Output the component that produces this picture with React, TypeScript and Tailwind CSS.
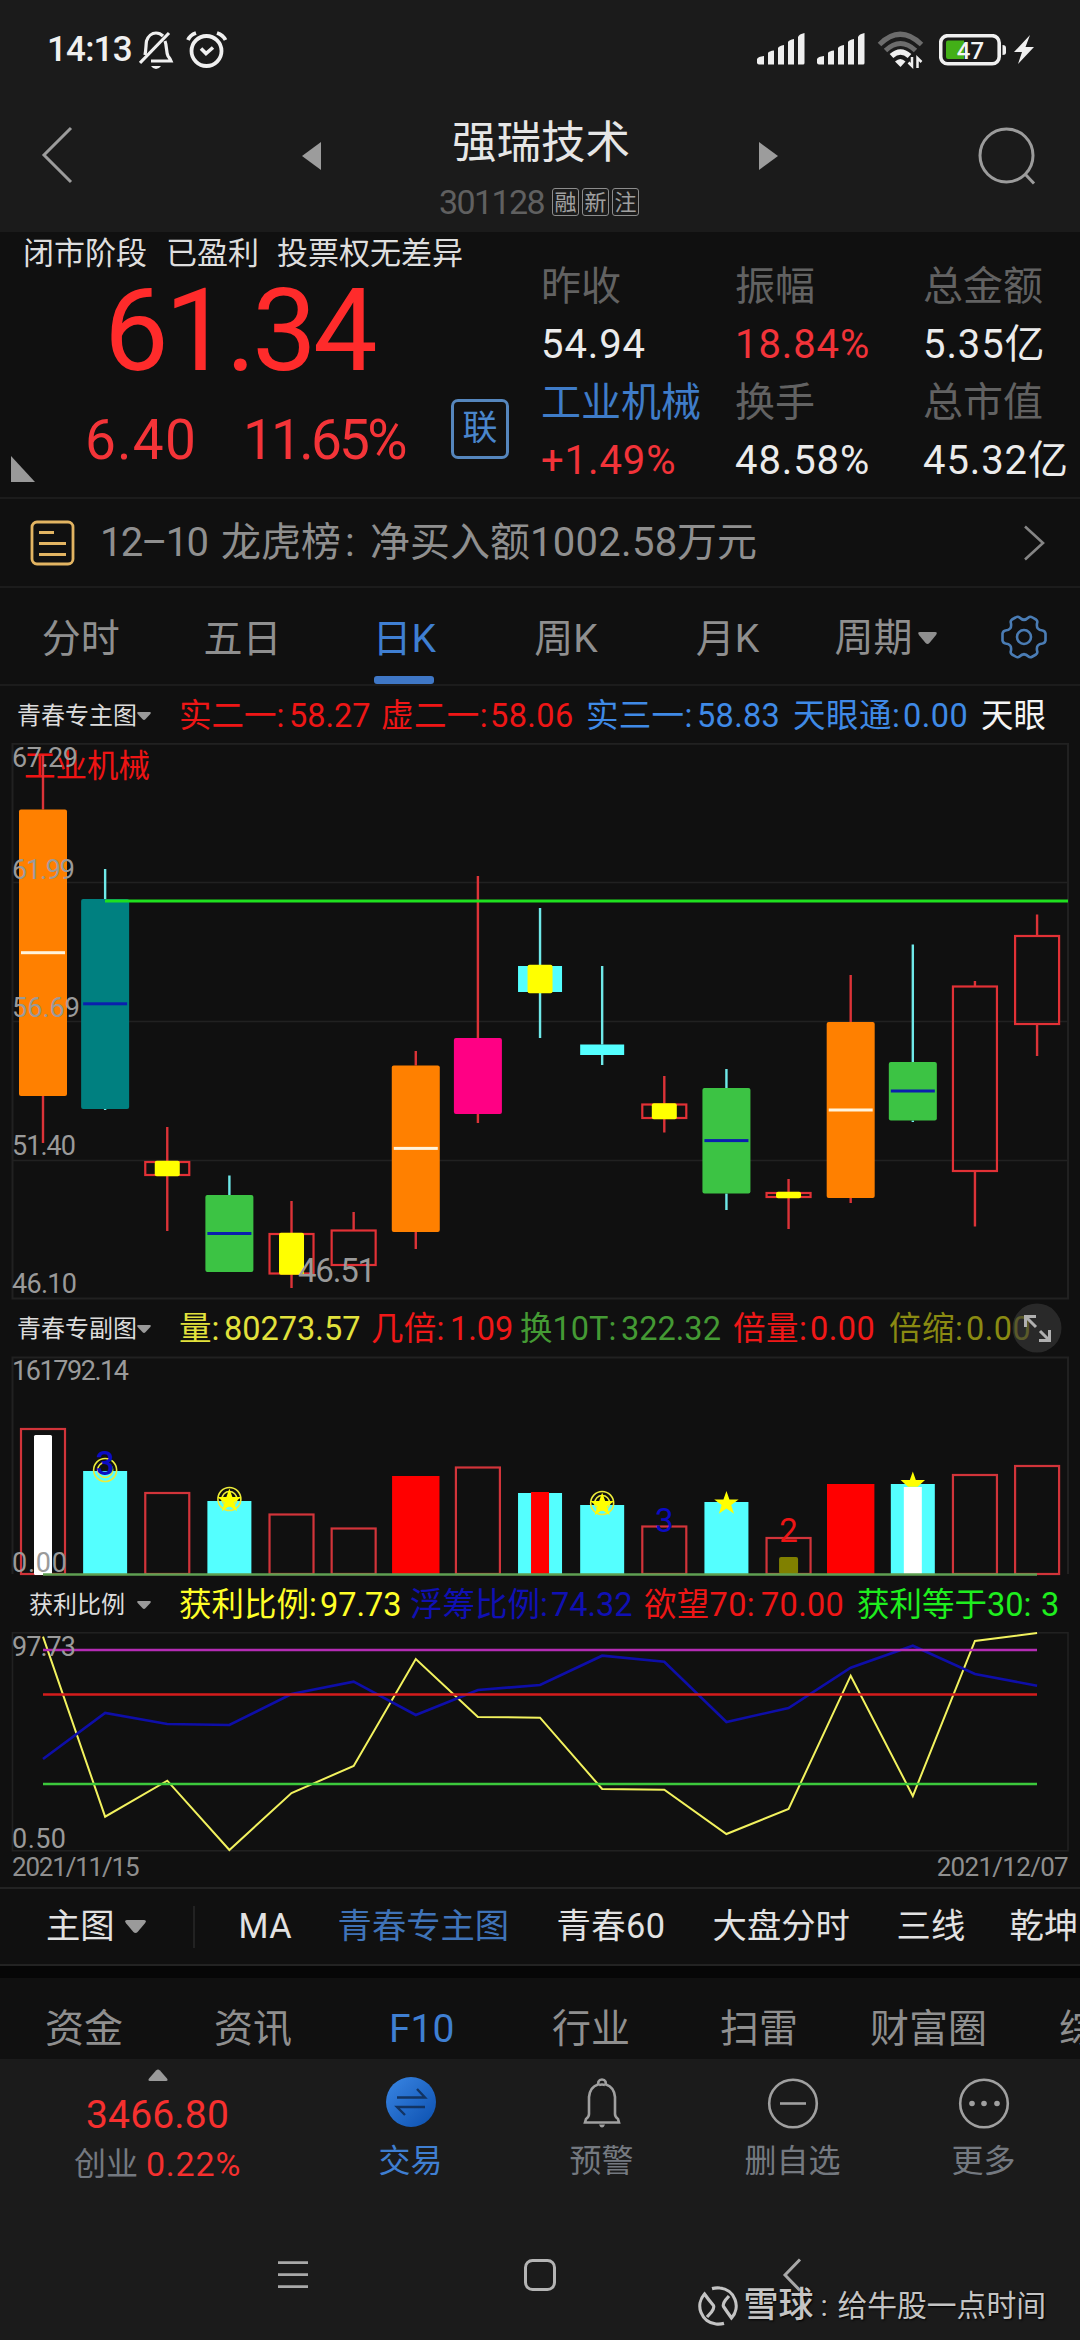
import type { ReactNode } from "react";

const X0 = 43;
const STEP = 62.13;
const cx = (i: number) => X0 + i * STEP;

type Kind = "orange" | "teal" | "hollow" | "green" | "pink" | "cyan";
type Candle = { kind: Kind; hi: number; lo: number; top: number; bot: number; mid?: number; yellow?: boolean };

/* y values are measured from the top of the 558px tall candle pane */
const CANDLES: Candle[] = [
  { kind: "orange", hi: 12, lo: 400, top: 66.5, bot: 353, mid: 209.7 },
  { kind: "teal", hi: 126, lo: 367, top: 156, bot: 366, mid: 260.8 },
  { kind: "hollow", hi: 384, lo: 488, top: 419, bot: 432, yellow: true },
  { kind: "green", hi: 432.5, lo: 520, top: 452, bot: 529, mid: 490.5 },
  { kind: "hollow", hi: 458, lo: 545, top: 491, bot: 530.5, yellow: true },
  { kind: "hollow", hi: 469, lo: 486.5, top: 487.5, bot: 522 },
  { kind: "orange", hi: 308, lo: 506, top: 322.5, bot: 489, mid: 405.4 },
  { kind: "pink", hi: 133, lo: 380, top: 295, bot: 371 },
  { kind: "cyan", hi: 165, lo: 295, top: 223, bot: 249, yellow: true },
  { kind: "cyan", hi: 223, lo: 322, top: 301.5, bot: 312 },
  { kind: "hollow", hi: 333, lo: 389.5, top: 361.5, bot: 375, yellow: true },
  { kind: "green", hi: 326, lo: 467, top: 345, bot: 450.5, mid: 397.6 },
  { kind: "hollow", hi: 436, lo: 486, top: 450, bot: 454, yellow: true },
  { kind: "orange", hi: 232, lo: 460, top: 279, bot: 455, mid: 367 },
  { kind: "green", hi: 201.6, lo: 379, top: 319, bot: 377.5, mid: 348 },
  { kind: "hollow", hi: 238, lo: 483.5, top: 243.5, bot: 428 },
  { kind: "hollow", hi: 171.6, lo: 313, top: 193, bot: 281 },
];

const FILL: Record<Kind, string> = {
  orange: "#ff8000",
  teal: "#008080",
  hollow: "none",
  green: "#3cc344",
  pink: "#ff0084",
  cyan: "#54ffff",
};

function CandleShape({ c, i }: { c: Candle; i: number }) {
  const x = cx(i);
  const red = c.kind === "orange" || c.kind === "hollow" || c.kind === "pink";
  const wick = red ? "#dc3338" : "#6fe9e9";
  const half = c.kind === "hollow" || c.kind === "cyan" ? 22 : 24;
  return (
    <g>
      <path d={`M${x} ${c.hi}V${c.top}M${x} ${c.bot}V${Math.max(c.lo, c.bot)}`} stroke={wick} strokeWidth="2.4" />
      <rect
        x={x - half}
        y={c.top}
        width={half * 2}
        height={c.bot - c.top}
        rx={c.kind === "hollow" || c.kind === "cyan" ? 0 : 2}
        fill={FILL[c.kind]}
        stroke={c.kind === "hollow" ? "#e23136" : "none"}
        strokeWidth="2.2"
      />
      {c.mid !== undefined && (
        <rect x={x - 22} y={c.mid - 1.5} width="44" height="3" fill={c.kind === "orange" ? "#fff3dc" : "#0a1fae"} />
      )}
      {c.yellow && <rect x={x - 12.5} y={c.top - 1.2} width="25" height={c.bot - c.top + 2.4} rx="2" fill="#ffff00" />}
    </g>
  );
}

function MainChart() {
  return (
    <svg className="block h-[558px] w-[1080px] shrink-0" viewBox="0 0 1080 558">
      <rect x="12.5" y="0.8" width="1055.5" height="554.7" fill="none" stroke="#212121" strokeWidth="2" />
      <path d="M12 139.5H1068M12 278.5H1068M12 417.5H1068" stroke="#212121" strokeWidth="1.6" />
      <text x="24" y="34" fill="#ee1414" fontSize="31.5">工业机械</text>
      {CANDLES.map((c, i) => (
        <CandleShape key={i} c={c} i={i} />
      ))}
      <path d="M105 158H1068" stroke="#1fe01f" strokeWidth="3" />
      <g fill="#9a9a9a" fontSize="27">
        <text x="12" y="24" textLength="66">67.29</text>
        <text x="12" y="136" textLength="63">61.99</text>
        <text x="12" y="274" textLength="68">56.69</text>
        <text x="12" y="412" textLength="64">51.40</text>
        <text x="12" y="550" textLength="65">46.10</text>
        <text x="298" y="539" fontSize="33" textLength="78">46.51</text>
      </g>
    </svg>
  );
}

type VolKind = "hollow" | "cyan" | "red";
const VOLS: { kind: VolKind; top: number }[] = [
  { kind: "hollow", top: 73 },
  { kind: "cyan", top: 115 },
  { kind: "hollow", top: 137 },
  { kind: "cyan", top: 145 },
  { kind: "hollow", top: 158.5 },
  { kind: "hollow", top: 172.5 },
  { kind: "red", top: 120 },
  { kind: "hollow", top: 111.5 },
  { kind: "cyan", top: 137 },
  { kind: "cyan", top: 149 },
  { kind: "hollow", top: 170.5 },
  { kind: "cyan", top: 146 },
  { kind: "hollow", top: 182 },
  { kind: "red", top: 128 },
  { kind: "cyan", top: 128 },
  { kind: "hollow", top: 119 },
  { kind: "hollow", top: 110 },
];

function Star({ x, y }: { x: number; y: number }) {
  return (
    <path
      transform={`translate(${x} ${y})`}
      d="M0-12.5 3-3.9 12.2-3.9 4.8 1.5 7.6 10.3 0 5 -7.6 10.3 -4.8 1.5 -12.2-3.9 -3-3.9Z"
      fill="#ffff00"
    />
  );
}

function Rings({ x, y }: { x: number; y: number }) {
  return (
    <g fill="none" stroke="#ecec3c" strokeWidth="1.6">
      <circle cx={x} cy={y} r="11.5" />
      <circle cx={x} cy={y} r="7.5" />
    </g>
  );
}

function VolumeChart() {
  return (
    <svg className="block h-[220px] w-[1080px] shrink-0" viewBox="0 0 1080 220">
      <path d="M12.5 218V1.5H1068V218" fill="none" stroke="#212121" strokeWidth="2" />
      {VOLS.map((v, i) =>
        v.kind === "hollow" ? (
          <rect key={i} x={cx(i) - 22} y={v.top} width="44" height={218 - v.top} fill="none" stroke="#d2343a" strokeWidth="2.2" />
        ) : (
          <rect
            key={i}
            x={cx(i) - (v.kind === "red" ? 23.7 : 22)}
            y={v.top}
            width={v.kind === "red" ? 47.4 : 44}
            height={218 - v.top}
            fill={v.kind === "red" ? "#ff0000" : "#54ffff"}
          />
        ),
      )}
      <rect x={cx(0) - 9} y="79" width="18" height="140" rx="1.5" fill="#fff" />
      <rect x={cx(8) - 9} y="136" width="18" height="82" fill="#ff0000" />
      <rect x={cx(12) - 9.5} y="201" width="19" height="17" rx="2" fill="#808000" />
      <path transform={`translate(${cx(14)} 128)`} d="M0-12.5 3-3.9 12.2-3.9 4.8 2.8H-4.8L-12.2-3.9-3-3.9Z" fill="#ffff00" />
      <rect x={cx(14) - 9} y="131" width="18" height="88" fill="#fff" />
      <path d="M43 218.5H1037" stroke="#5f9f52" strokeWidth="2.6" />
      <Rings x={cx(1)} y={114} />
      <Rings x={cx(3)} y={143} />
      <Star x={cx(3)} y={145} />
      <Rings x={cx(9)} y={147} />
      <Star x={cx(9)} y={149} />
      <Star x={cx(11)} y={147.5} />
      <g fontSize="33" textAnchor="middle" fill="#0b0bc4">
        <text x={cx(1)} y="119" fontWeight="500">3</text>
        <text x={cx(10)} y="176">3</text>
        <text x={cx(12)} y="186" fill="#ee1515">2</text>
      </g>
      <g fill="#9a9a9a" fontSize="27">
        <text x="12" y="24" textLength="117">161792.14</text>
        <text x="12" y="216" textLength="55">0.00</text>
      </g>
    </svg>
  );
}

const PROFIT = [4.7, 184.7, 148.7, 218, 161, 134, 27, 85, 85.7, 157, 157.7, 202, 177, 43.7, 164, 9, 1];
const FLOAT = [127, 81, 92, 93, 62, 49.7, 83, 58, 53, 23.7, 29.7, 90, 76, 35.7, 13.7, 42, 53.7];
const pts = (v: number[]) => v.map((y, i) => `${cx(i)},${y}`).join(" ");

function ProfitChart() {
  return (
    <svg className="block h-[220px] w-[1080px] shrink-0" viewBox="0 0 1080 220">
      <rect x="12.5" y="0.8" width="1055.5" height="218" fill="none" stroke="#212121" strokeWidth="1.6" />
      <g fill="none">
        <polyline points={pts(PROFIT)} stroke="#f2f25e" strokeWidth="2" />
        <polyline points={pts(FLOAT)} stroke="#0e0ea8" strokeWidth="2.6" />
        <path d="M43 18H1037" stroke="#b52cb5" strokeWidth="2.6" />
        <path d="M43 62.5H1037" stroke="#d41c1c" strokeWidth="2.4" />
        <path d="M43 152H1037" stroke="#3cc83c" strokeWidth="2.4" />
      </g>
      <g fill="#9a9a9a" fontSize="27">
        <text x="12" y="24" textLength="64">97.73</text>
        <text x="12" y="216" textLength="54">0.50</text>
      </g>
    </svg>
  );
}

function Caret({ className }: { className: string }) {
  return (
    <svg className={className} viewBox="0 0 20 12" preserveAspectRatio="none">
      <path d="M2 0H18Q21 0 19 3L12 11Q10 13 8 11L1 3Q-1 0 2 0Z" fill="currentColor" />
    </svg>
  );
}

function Legend({ name, inset, gap, children }: { name: string; inset: string; gap: string; children: ReactNode }) {
  return (
    <div className="flex h-full items-center whitespace-nowrap">
      <div className={`flex w-[179px] shrink-0 items-center text-[24px] leading-[36px] text-[#dcdcdc] ${inset}`}>
        <span>{name}</span>
        <Caret className={`h-[8px] w-[14px] text-[#9a9a9a] ${gap}`} />
      </div>
      <div className="flex min-w-0 flex-1 text-[32.5px] leading-[44px]">{children}</div>
    </div>
  );
}

function Entry({ w, color, label, lw, value }: { w: string; color: string; label: string; lw: string; value: string }) {
  return (
    <span className={`flex shrink-0 ${w} ${color}`}>
      <span className={`shrink-0 ${lw}`}>{label}</span>
      <span>{value}</span>
    </span>
  );
}

function Signal({ className }: { className: string }) {
  return (
    <svg className={`h-[34px] w-[48px] ${className}`} viewBox="0 0 48 34" fill="#efefef">
      <path d="M0 26Q1 23.5 7 23V31.5H2Q0 31.5 0 29.5Z" />
      <path d="M11 20Q12 18 17 17.5V31.5H11Z" />
      <path d="M21 15Q22 13 27 12V31.5H21Z" />
      <path d="M31 9Q32 7 37 6V31.5H31Z" />
      <path d="M41 4Q42 1 47.5 0V30Q47.5 31.5 46 31.5H41Z" />
    </svg>
  );
}

function StatusBar() {
  return (
    <div className="flex h-[98px] items-center pl-[47px] pr-[46px] pt-[2px]">
      <span className="w-[92px] text-[35px] font-medium leading-[44px] tracking-[-0.8px] text-[#f0f0f0]">14:13</span>
      <svg className="h-[40px] w-[90px]" viewBox="0 0 90 40" fill="none" stroke="#f0f0f0" strokeWidth="3.2">
        <path d="M6 25C7 20 7 14 7.5 11C9 6 13 3 17 3C20 3 22 4 24 6" />
        <path d="M26 11C28 16 27 22 29 26Q31 28.5 32 31H12" />
        <path d="M1 33 30 3" />
        <path d="M12 36H22Q20 39 17 39T12 36Z" fill="#f0f0f0" stroke="none" />
        <circle cx="67.5" cy="21" r="15" strokeWidth="3.8" />
        <path d="M62 18.5 67 23.5 74 17.5" strokeWidth="3.6" />
        <path d="M49 10Q51 5 57 3M78 3Q84 5 86.5 10" strokeWidth="3.8" />
      </svg>
      <div className="ml-auto flex items-center">
        <Signal className="mr-[12px]" />
        <Signal className="mr-[12px]" />
        <svg className="h-[38px] w-[48px]" viewBox="0 0 48 38" fill="none">
          <path d="M2.5 13.5Q23-7 44.5 13.5" stroke="#6c6c6c" strokeWidth="5" />
          <path d="M8.5 19.5Q23.5 5.5 38.5 19.5" stroke="#6c6c6c" strokeWidth="5" />
          <path d="M14.5 25Q23.5 17 32.5 25" stroke="#f0f0f0" strokeWidth="5.5" />
          <path d="M18 30.5Q23.5 25.5 28.5 30.5L23.5 36Z" fill="#f0f0f0" />
          <path d="M35 26V35L31.5 31.5M40.5 37V27L44.5 31" stroke="#f0f0f0" strokeWidth="2.5" />
        </svg>
        <svg className="ml-[14px] h-[32px] w-[69px]" viewBox="0 0 69 32">
          <rect x="1.7" y="1.7" width="58.5" height="28" rx="7" fill="none" stroke="#f0f0f0" strokeWidth="3.6" />
          <path d="M9 6.5H25V25H9Q7 25 7 23V8.5Q7 6.500 9 6.5Z" fill="#43b018" />
          <path d="M63.5 11Q67 11 67 14V18.5Q67 21 63.5 21Z" fill="#f0f0f0" />
          <text x="31.5" y="24.500" textAnchor="middle" fontSize="24" fontWeight="500" fill="#f4f4f4">47</text>
        </svg>
        <svg className="ml-[6px] h-[30px] w-[20px]" viewBox="0 0 20 30">
          <path d="M16 0 0 17H8L4 29 20 12H11.5Z" fill="#f0f0f0" />
        </svg>
      </div>
    </div>
  );
}

function TitleBar() {
  return (
    <div className="flex h-[134px] items-center pl-[41px] pr-[44px]">
      <svg className="mb-[20px] h-[58px] w-[32px]" viewBox="0 0 32 58">
        <path d="M30 2 3 29 30 56" fill="none" stroke="#9c9c9c" strokeWidth="3" />
      </svg>
      <svg className="mb-[18px] ml-[229px] h-[28px] w-[19px]" viewBox="0 0 19 28">
        <path d="M19 0V28L0 14Z" fill="#9c9c9c" />
      </svg>
      <div className="flex flex-1 flex-col items-center pt-[3px]">
        <div className="pl-[2px] text-[44.5px] leading-[58px] text-[#e6e6e6]">强瑞技术</div>
        <div className="mt-[13px] flex items-center pr-[2px]">
          <span className="text-[34px] leading-[34px] tracking-[-1.6px] text-[#606060]">301128</span>
          <span className="ml-[8px] flex gap-[3px] text-[22px] leading-[25px] text-[#a0a0a0]">
            {["融", "新", "注"].map((t) => (
              <span key={t} className="flex h-[28px] w-[27px] items-center justify-center rounded-[3px] border-[1.5px] border-[#8c8c8c]">
                {t}
              </span>
            ))}
          </span>
        </div>
      </div>
      <svg className="mb-[18px] h-[28px] w-[19px]" viewBox="0 0 19 28">
        <path d="M0 0V28L19 14Z" fill="#9c9c9c" />
      </svg>
      <svg className="mb-[19px] ml-[200px] h-[58px] w-[58px]" viewBox="0 0 58 58" fill="none" stroke="#9c9c9c" strokeWidth="3">
        <circle cx="28.5" cy="28.5" r="26.5" />
        <path d="M47 47 56 56.5" />
      </svg>
    </div>
  );
}

function Stat({ label, value, blue, red }: { label: string; value: string; blue?: boolean; red?: boolean }) {
  return (
    <div className="whitespace-nowrap text-[40px]">
      <div className={`h-[58px] leading-[58px] ${blue ? "text-[#3f7cc8]" : "text-[#626262]"}`}>{label}</div>
      <div className={`h-[58px] leading-[58px] tracking-[0.9px] ${red ? "text-[#f23339]" : "text-[#ebebeb]"}`}>{value}</div>
    </div>
  );
}

function Quote() {
  return (
    <div className="flex h-[267px] shrink-0 border-b-2 border-[#1c1c1c]">
      <div className="flex w-[541px] shrink-0 flex-col">
        <div className="mt-[1px] flex h-[42px] items-center gap-[19px] whitespace-nowrap pl-[23px] text-[31px] text-[#dedede]">
          <span>闭市阶段</span>
          <span>已盈利</span>
          <span className="-ml-[1px]">投票权无差异</span>
        </div>
        <div className="mt-[5px] h-[102px] pl-[104px] text-[115px] leading-[102px] tracking-[-3.8px] text-[#ff2b2b]">61.34</div>
        <div className="flex h-[106px]">
          <svg className="ml-[11px] mt-[74px] h-[26px] w-[24px]" viewBox="0 0 24 26">
            <path d="M0 0 24 26H0Z" fill="#999" />
          </svg>
          <span className="ml-[50px] mt-[25px] w-[158px] text-[55px] leading-[66px] tracking-[1.2px] text-[#f43438]">6.40</span>
          <span className="mt-[25px] w-[208px] text-[55px] leading-[66px] tracking-[-2.8px] text-[#f43438]">11.65%</span>
          <span className="mt-[17px] flex h-[60px] w-[58px] items-center justify-center rounded-[7px] border-[3px] border-[#5586bd] text-[35px] leading-[50px] text-[#4a86cc]">
            联
          </span>
        </div>
      </div>
      <div className="grid h-[232px] flex-1 grid-cols-[194px_188px_1fr] content-start pt-[26px]">
        <Stat label="昨收" value="54.94" />
        <Stat label="振幅" value="18.84%" red />
        <Stat label="总金额" value="5.35亿" />
        <Stat label="工业机械" value="+1.49%" blue red />
        <Stat label="换手" value="48.58%" />
        <Stat label="总市值" value="45.32亿" />
      </div>
    </div>
  );
}

function News() {
  return (
    <div className="flex h-[89px] shrink-0 items-center whitespace-nowrap border-b-2 border-[#1c1c1c] pl-[30px] pr-[35px] text-[40px] text-[#8f8f8f]">
      <svg className="h-[46px] w-[45px]" viewBox="0 0 45 46" fill="none" stroke="#e2b462" strokeWidth="2.8">
        <rect x="2" y="2" width="41" height="42" rx="5" />
        <path d="M9 12.5H24M9 23.5H36M9 34.5H36" />
      </svg>
      <span className="ml-[25px] w-[121px] tracking-[-1.8px]">12–10</span>
      <span className="w-[120px]">龙虎榜</span>
      <span className="w-[29px] pl-[4px]">:</span>
      <span>净买入额</span>
      <span className="w-[147px] tracking-[0.3px]">1002.58</span>
      <span>万元</span>
      <svg className="ml-auto h-[36px] w-[22px]" viewBox="0 0 22 36">
        <path d="M2 1.5 20 18 2 34.5" fill="none" stroke="#858585" strokeWidth="2.6" />
      </svg>
    </div>
  );
}

function Gear() {
  return (
    <svg className="h-[44px] w-[46px]" viewBox="0 0 46 44" fill="none" stroke="#4a7cb4" strokeWidth="2.6" strokeLinejoin="round">
      <path d="M14.5 2.5Q17 1 18.5 2.5Q23 7 27.5 2.5Q29 1 31.5 2.5L35 4.5Q37 6 36 8.5Q35 15 41.5 15.5Q44 16 44.5 18.5V25.5Q44 28 41.5 28.5Q35 29 36 35.5Q37 38 35 39.5L31.5 41.5Q29 43 27.5 41.5Q23 37 18.5 41.5Q17 43 14.5 41.5L11 39.5Q9 38 10 35.5Q11 29 4.5 28.5Q2 28 1.5 25.5V18.5Q2 16 4.5 15.5Q11 15 10 8.5Q9 6 11 4.5Z" />
      <circle cx="23" cy="22" r="7" />
    </svg>
  );
}

function PeriodTabs() {
  return (
    <div className="flex h-[98px] shrink-0 border-b-2 border-[#1c1c1c] text-[39px] text-[#8f8f8f]">
      {["分时", "五日", "日K", "周K", "月K"].map((t) => {
        const on = t === "日K";
        return (
          <div key={t} className="flex w-[161.7px] flex-col items-center">
            <div className={`h-[88px] pt-[2px] leading-[98px] ${on ? "text-[#3f7fd2]" : ""}`}>{t}</div>
            {on && <div className="h-[8px] w-[60px] rounded-[3px] bg-[#3f77c6]" />}
          </div>
        );
      })}
      <div className="flex h-[98px] items-center pl-[26px] pt-[2px]">
        周期
        <Caret className="ml-[6px] h-[12px] w-[19px]" />
      </div>
      <div className="ml-auto flex h-[98px] items-center pr-[33px]">
        <Gear />
      </div>
    </div>
  );
}

function IndicatorTabs() {
  return (
    <div className="flex h-[79px] shrink-0 items-center overflow-hidden whitespace-nowrap border-y-2 border-[#232323] text-[34.3px] text-[#e2e2e2]">
      <span className="ml-[46px] shrink-0">主图</span>
      <Caret className="ml-[10px] h-[13px] w-[21px] shrink-0 text-[#9a9a9a]" />
      <span className="ml-[47px] h-[42px] w-[2px] shrink-0 bg-[#222]" />
      <span className="ml-[44px] w-[99px] shrink-0 tracking-[0.5px]">MA</span>
      <span className="w-[219px] shrink-0 text-[#3f73b8]">青春专主图</span>
      <span className="w-[156px] shrink-0 tracking-[0.4px]">青春60</span>
      <span className="w-[184px] shrink-0">大盘分时</span>
      <span className="w-[113px] shrink-0">三线</span>
      <span className="shrink-0">乾坤</span>
    </div>
  );
}

function InfoTabs() {
  return (
    <div className="flex h-[81px] shrink-0 overflow-hidden whitespace-nowrap text-[39px] leading-[102px] text-[#8f8f8f]">
      <span className="ml-[45px] w-[169px] shrink-0">资金</span>
      <span className="w-[175px] shrink-0">资讯</span>
      <span className="w-[163px] shrink-0 text-[#3f7fd2]">F10</span>
      <span className="w-[168px] shrink-0">行业</span>
      <span className="w-[150px] shrink-0">扫雷</span>
      <span className="w-[189px] shrink-0">财富圈</span>
      <span className="shrink-0">综</span>
    </div>
  );
}

function NavItem({ label, active, children }: { label: string; active?: boolean; children: ReactNode }) {
  return (
    <div className="flex w-[191px] flex-col items-center">
      <svg className="mt-[18px] h-[54px] w-[54px]" viewBox="0 0 54 54" fill="none" stroke="#a0a0a0" strokeWidth="2.6">
        {children}
      </svg>
      <span className={`mt-[8px] text-[32px] leading-[44px] ${active ? "text-[#3f7fd2]" : "text-[#747980]"}`}>{label}</span>
    </div>
  );
}

function BottomNav() {
  return (
    <div className="flex h-[141px] shrink-0">
      <div className="flex w-[315px] flex-col items-center">
        <svg className="mt-[10px] h-[12px] w-[20px]" viewBox="0 0 20 12">
          <path d="M8 1.5Q10-.5 12 1.5L19 9.5Q20.5 12 18 12H2Q-.5 12 1 9.5Z" fill="#9a9a9a" />
        </svg>
        <div className="mt-[11px] text-[39px] leading-[46px] tracking-[0.2px] text-[#f6302f]">3466.80</div>
        <div className="mt-[3px] flex gap-[8px] text-[32px] leading-[46px]">
          <span className="text-[#747980]">创业</span>
          <span className="text-[34px] tracking-[0.8px] text-[#f6302f]">0.22%</span>
        </div>
      </div>
      <NavItem label="交易" active>
        <defs>
          <linearGradient id="trade" x1="0" y1="0" x2="1" y2="1">
            <stop offset="0" stopColor="#3a86e4" />
            <stop offset="1" stopColor="#0b4fae" />
          </linearGradient>
        </defs>
        <circle cx="27" cy="25" r="25" fill="url(#trade)" stroke="none" />
        <path d="M13 20.5H41L33 12M41 30H13L21 38" stroke="#123463" strokeWidth="2.4" />
      </NavItem>
      <NavItem label="预警">
        <path d="M10 45.5H44L43 42Q40 40 40 37V20Q39 10 31 7.5Q30.5 5 30.5 4.5Q29.5 2.5 27 2.5T23.5 4.5Q23.5 5 23 7.5Q15 10 14 20V37Q14 40 11 42Z" />
        <path d="M24 47.5H30Q29 50.5 27 50.5T24 47.5Z" fill="#a0a0a0" stroke="none" />
        <path d="M24 8Q27 7 30 8" />
      </NavItem>
      <NavItem label="删自选">
        <circle cx="27" cy="26.5" r="23.8" />
        <path d="M14 26.5H40" />
      </NavItem>
      <NavItem label="更多">
        <circle cx="27" cy="26.5" r="23.8" />
        <g fill="#a0a0a0" stroke="none">
          <circle cx="15" cy="26.5" r="2.8" />
          <circle cx="27" cy="26.5" r="2.8" />
          <circle cx="40" cy="26.5" r="2.8" />
        </g>
      </NavItem>
    </div>
  );
}

function SystemNav() {
  return (
    <div className="relative flex h-[140px] items-start pl-[278px] pt-[58px]">
      <svg className="h-[34px] w-[30px]" viewBox="0 0 30 34">
        <path d="M0 4.7H30M0 16.7H30M0 28.7H30" stroke="#a8a8a8" strokeWidth="2.8" />
      </svg>
      <svg className="ml-[215px] h-[34px] w-[34px]" viewBox="0 0 34 34">
        <rect x="2.5" y="2.5" width="29" height="29" rx="7" fill="none" stroke="#b4b4b4" strokeWidth="3" />
      </svg>
      <svg className="ml-[225px] h-[34px] w-[20px]" viewBox="0 0 20 34">
        <path d="M18 1.5 3 17 18 32.5" fill="none" stroke="#a8a8a8" strokeWidth="3" />
      </svg>
      <div className="absolute bottom-[14px] right-[34px] flex items-center whitespace-nowrap text-[#c4c4c4] [text-shadow:1px_1px_2px_#000]">
        <svg className="h-[40px] w-[40px]" viewBox="0 0 40 40" fill="none" stroke="#c4c4c4" strokeWidth="3.2">
          <path d="M14 2.6Q18 1.5 22 2A18 18 0 0 1 33.5 32Q28.5 25 25.500 20.500Q24.5 18 27.500 14L31 10" />
          <path d="M26 37.400Q22 38.500 18 38A18 18 0 0 1 6.500 8Q11.500 15 15.500 19.500Q16.500 22 13.500 26L9 31" />
        </svg>
        <span className="ml-[5px] text-[35px] font-medium leading-[40px]">雪球</span>
        <span className="w-[24px] pl-[7px] text-[30px] leading-[40px]">:</span>
        <span className="text-[29.8px] leading-[40px]">给牛股一点时间</span>
      </div>
    </div>
  );
}

export default function App() {
  return (
    <div className="flex h-[2340px] w-[1080px] flex-col overflow-hidden bg-[#101010] font-[Roboto,'Noto_Sans_CJK_SC',sans-serif]">
      <div className="shrink-0 bg-[#1b1b1b]">
        <StatusBar />
        <TitleBar />
      </div>
      <Quote />
      <News />
      <PeriodTabs />
      <div className="h-[57px] shrink-0 pt-[2px]">
        <Legend name="青春专主图" inset="pl-[17px]" gap="ml-0">
          <Entry w="w-[202px]" color="text-[#ee1616]" label="实二一:" lw="w-[110px]" value="58.27" />
          <Entry w="w-[205px] tracking-[0.4px]" color="text-[#ee1616]" label="虚二一:" lw="w-[109px]" value="58.06" />
          <Entry w="w-[207px] tracking-[0.3px]" color="text-[#3f8ae6]" label="实三一:" lw="w-[111px]" value="58.83" />
          <Entry w="w-[188px] tracking-[0.5px]" color="text-[#3f8ae6]" label="天眼通:" lw="w-[110px]" value="0.00" />
          <Entry w="w-[70px]" color="text-[#f4f4f4]" label="天眼" lw="w-[66px]" value="" />
        </Legend>
      </div>
      <MainChart />
      <div className="relative h-[55px] shrink-0">
        <Legend name="青春专副图" inset="pl-[17px]" gap="ml-0">
          <Entry w="w-[192px]" color="text-[#e2e23c]" label="量:" lw="w-[45px]" value="80273.57" />
          <Entry w="w-[149px]" color="text-[#f01818]" label="几倍:" lw="w-[79px] tracking-[0.3px]" value="1.09" />
          <Entry w="w-[213px]" color="text-[#449a34]" label="换10T:" lw="w-[101px]" value="322.32" />
          <Entry w="w-[156px] tracking-[0.5px]" color="text-[#f01818]" label="倍量:" lw="w-[77px]" value="0.00" />
          <Entry w="w-[150px] tracking-[0.5px]" color="text-[#8a8a12]" label="倍缩:" lw="w-[77px]" value="0.00" />
        </Legend>
        <svg className="absolute right-[18px] top-[2px] h-[50px] w-[50px]" viewBox="0 0 50 50">
          <circle cx="25" cy="25" r="24.5" fill="#3a3a3a" fillOpacity=".6" />
          <path d="M24 24 14 14M13.5 24V13.5H24M28 28 37 37M37.5 27V37.5H27" fill="none" stroke="#b0b0b0" strokeWidth="3" />
        </svg>
      </div>
      <VolumeChart />
      <div className="h-[56px] shrink-0 pt-[1px]">
        <Legend name="获利比例" inset="pl-[29px]" gap="ml-[12px]">
          <Entry w="w-[231px]" color="text-[#ffff28]" label="获利比例:" lw="w-[141px]" value="97.73" />
          <Entry w="w-[234px]" color="text-[#1010b4]" label="浮筹比例:" lw="w-[141px]" value="74.32" />
          <Entry w="w-[213px] tracking-[0.3px]" color="text-[#ee1616]" label="欲望70:" lw="w-[117px]" value="70.00" />
          <Entry w="w-[200px]" color="text-[#1fee1f]" label="获利等于30:" lw="w-[184px]" value="3" />
        </Legend>
      </div>
      <ProfitChart />
      <div className="flex h-[35px] shrink-0 justify-between pl-[12px] pr-[12px] text-[26px] leading-[30px] text-[#8f8f8f]">
        <span className="tracking-[-1.2px]">2021/11/15</span>
        <span className="tracking-[-0.7px]">2021/12/07</span>
      </div>
      <IndicatorTabs />
      <div className="h-[12px] shrink-0 bg-[#060606]" />
      <InfoTabs />
      <div className="flex-1 bg-[#1b1b1b]">
        <BottomNav />
        <SystemNav />
      </div>
    </div>
  );
}
